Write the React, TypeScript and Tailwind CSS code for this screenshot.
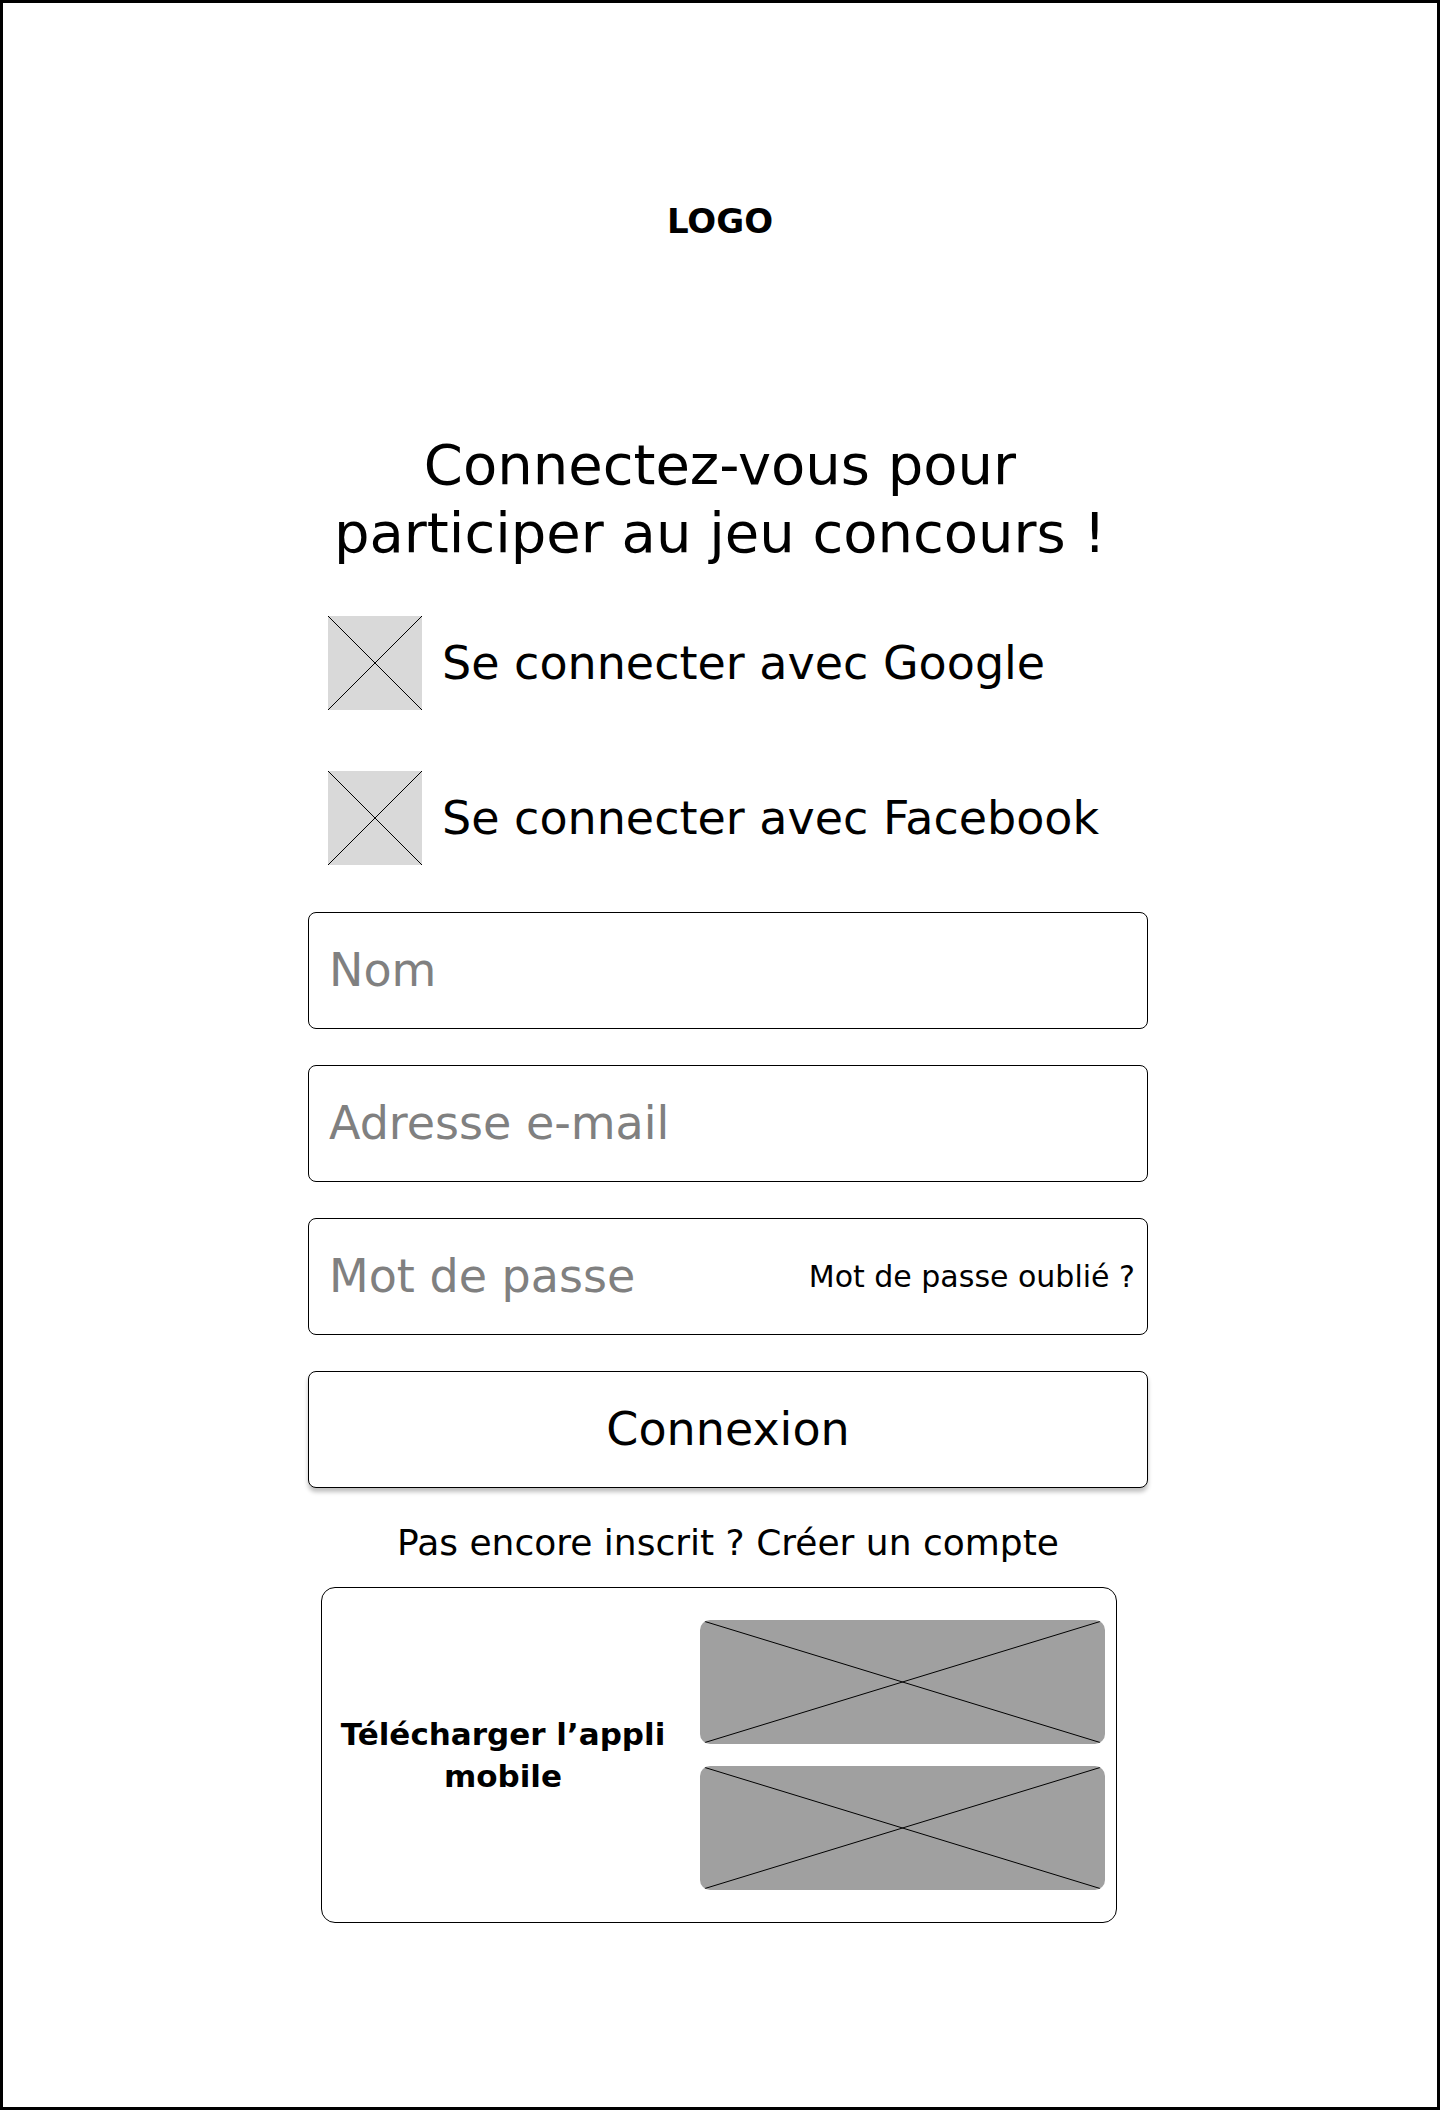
import React from 'react';

// Crossed placeholder used by the wireframe for images / icons
function Cross({ className }: { className?: string }) {
  return (
    <svg className={className} viewBox="0 0 100 100" preserveAspectRatio="none">
      <line x1="0" y1="0" x2="100" y2="100" stroke="#000" strokeWidth="1" vectorEffect="non-scaling-stroke" />
      <line x1="100" y1="0" x2="0" y2="100" stroke="#000" strokeWidth="1" vectorEffect="non-scaling-stroke" />
    </svg>
  );
}

function SocialRow({ label }: { label: string }) {
  return (
    <div className="flex items-center h-[94px] pl-5 gap-[20px]">
      <div className="w-[94px] h-[94px] bg-[#d9d9d9] shrink-0">
        <Cross className="w-full h-full" />
      </div>
      <span className="text-[46px] text-black whitespace-nowrap">{label}</span>
    </div>
  );
}

function Field({ placeholder, right }: { placeholder: string; right?: string }) {
  return (
    <div className="h-[117px] rounded-lg border-[1.5px] border-black flex items-center justify-between pl-5 pr-3">
      <span className="text-[46px] text-[#808080]">{placeholder}</span>
      {right && <span className="text-[30px] text-black">{right}</span>}
    </div>
  );
}

export default function App() {
  return (
    <div className="w-[1440px] h-[2110px] border-[3px] border-black bg-white flex flex-col items-center pt-[201px] font-['DejaVu_Sans',sans-serif] text-black">
      {/* Logo */}
      <div className="text-[34px] leading-[34px] font-bold">LOGO</div>

      {/* Title */}
      <h1 className="mt-[193px] text-[56px] leading-[68px] text-center">
        Connectez-vous pour
        <br />
        participer au jeu concours !
      </h1>

      {/* Form */}
      <div className="w-[840px] ml-4 mt-[49px] flex flex-col">
        <SocialRow label="Se connecter avec Google" />
        <div className="mt-[61px]">
          <SocialRow label="Se connecter avec Facebook" />
        </div>

        <div className="mt-[47px] flex flex-col gap-9">
          <Field placeholder="Nom" />
          <Field placeholder="Adresse e-mail" />
          <Field placeholder="Mot de passe" right="Mot de passe oublié ?" />
          <button className="h-[117px] rounded-lg border-[1.5px] border-black bg-white shadow-[0_4px_4px_rgba(0,0,0,0.25)] text-[46px]">
            Connexion
          </button>
        </div>

        <p className="mt-[35px] text-[36px] leading-[40px] text-center">Pas encore inscrit ? Créer un compte</p>

        {/* Mobile app download */}
        <div className="mt-6 ml-[13px] w-[796px] h-[336px] rounded-[14px] border border-black flex items-center pr-[11px]">
          <div className="flex-1 pr-4 text-center text-[31px] leading-[42px] font-semibold">
            Télécharger l’appli
            <br />
            mobile
          </div>
          <div className="w-[405px] flex flex-col gap-[22px]">
            <div className="h-[124px] rounded-[10px] bg-[#a0a0a0] overflow-hidden">
              <Cross className="w-full h-full" />
            </div>
            <div className="h-[124px] rounded-[10px] bg-[#a0a0a0] overflow-hidden">
              <Cross className="w-full h-full" />
            </div>
          </div>
        </div>
      </div>
    </div>
  );
}
